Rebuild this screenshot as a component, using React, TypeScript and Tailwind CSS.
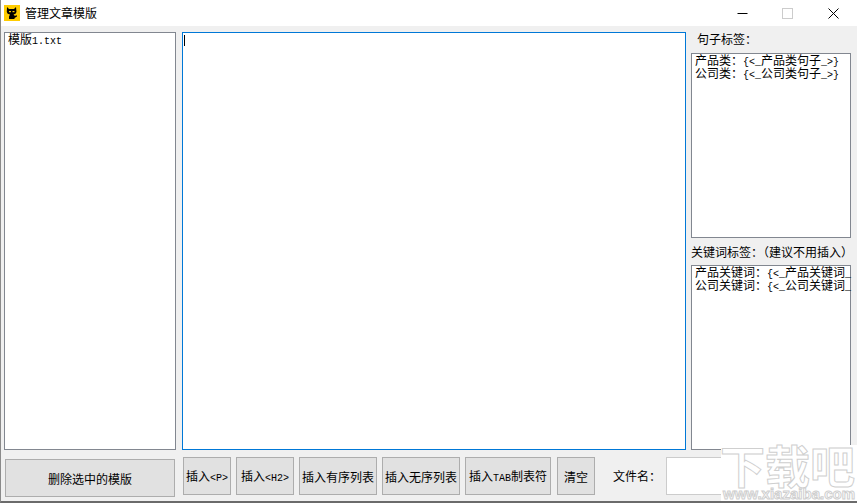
import React from "react";

const cjk = "font-['Noto_Sans_CJK_SC','Liberation_Sans',sans-serif]";
const C = "\uFF1A";
const L = "\uFF08";
const R = "\uFF09";

function M({ children }: { children: React.ReactNode }) {
  return <span className="font-['Liberation_Mono',monospace] text-[10px] leading-none">{children}</span>;
}

function Btn({ w, className, children }: { w: string; className?: string; children: React.ReactNode }) {
  return (
    <button className={`${w} ${className ?? ""} h-[38px] shrink-0 border border-[#adadad] bg-[#e1e1e1] text-center text-[12px] leading-[13px] whitespace-nowrap text-black`}>
      <span>{children}</span>
    </button>
  );
}

function TagBox({ h, rows }: { h: string; rows: React.ReactNode[] }) {
  return (
    <div className={`${h} w-[160px] border border-[#828790] bg-white pl-[3px] text-[12px] text-black`}>
      {rows.map((r, i) => (
        <div key={i} className="h-[13px] whitespace-nowrap leading-[11px]">{r}</div>
      ))}
    </div>
  );
}

export default function App() {
  return (
    <div className={`${cjk} relative flex h-[503px] w-[857px] flex-col overflow-hidden border-b-2 border-l border-b-[#6b6b6b] border-l-[#8a8a8a] bg-[#f0f0f0] text-black`}>
      <div className="flex h-[26px] shrink-0 items-center bg-white">
        <svg className="ml-[3px]" width="16" height="16" viewBox="0 0 16 16">
          <rect width="16" height="16" fill="#ffcc00" />
          <path d="M3 2 L5 4 H10 L12 2 L12.5 7 Q12 9 9.5 9.5 L11 11 L12.5 10 L13 11.5 L10.5 13 V14 H5 V11.5 L6 9.5 Q3 9 2.8 7 Z" fill="#000" />
          <rect x="5" y="6" width="2" height="1.2" fill="#ffcc00" />
          <rect x="8.5" y="6" width="2" height="1.2" fill="#ffcc00" />
        </svg>
        <span className="ml-[5px] text-[12px] leading-[16px]">管理文章模版</span>
        <div className="ml-auto flex h-full items-center">
          <svg className="mr-[34px]" width="11" height="11" viewBox="0 0 11 11"><path d="M0.5 5.5 H10.5" stroke="#000" strokeWidth="1" /></svg>
          <svg className="mr-[35px]" width="11" height="11" viewBox="0 0 11 11"><rect x="0.5" y="0.5" width="10" height="10" fill="none" stroke="#cccccc" /></svg>
          <svg className="mr-[18px]" width="11" height="11" viewBox="0 0 11 11"><path d="M0.5 0.5 L10.5 10.5 M10.5 0.5 L0.5 10.5" stroke="#000" strokeWidth="1" /></svg>
        </div>
      </div>

      <div className="box-content flex h-[418px] shrink-0 pl-[3px] pt-[6px]">
        <div className="h-[418px] w-[172px] border border-[#828790] bg-white pl-[3px] text-[12px]">
          <div className="h-[13px] leading-[11px]">模版<M>1.txt</M></div>
        </div>
        <div className="ml-[6px] h-[418px] w-[504px] border border-[#0078d7] bg-white pl-[1px] pt-[2px]">
          <div className="h-[11px] w-px bg-black" />
        </div>
        <div className="ml-[5px] flex h-[418px] flex-col">
          <div className="ml-[6px] h-[21px] text-[12px] leading-[14px]">句子标签{C}</div>
          <TagBox
            h="h-[185px]"
            rows={[
              <>产品类{C}<M>{"{<_"}</M>产品类句子<M>{"_>}"}</M></>,
              <>公司类{C}<M>{"{<_"}</M>公司类句子<M>{"_>}"}</M></>,
            ]}
          />
          <div className="mt-[7px] h-[20px] whitespace-nowrap text-[12px] leading-[14px]">关键词标签{C}{L}建议不用插入{R}</div>
          <TagBox
            h="h-[185px]"
            rows={[
              <>产品关键词{C}<M>{"{<_"}</M>产品关键词<M>_</M></>,
              <>公司关键词{C}<M>{"{<_"}</M>公司关键词<M>_</M></>,
            ]}
          />
        </div>
      </div>

      <div className="flex items-start pl-[4px] pt-[7px]">
        <button className="mt-[2px] h-[38px] w-[170px] shrink-0 border border-[#adadad] bg-[#e1e1e1] text-[12px] leading-[13px]">删除选中的模版</button>
        <div className="ml-[8px] flex gap-[5px]">
          <Btn w="w-[48px]">插入<M>{"<P>"}</M></Btn>
          <Btn w="w-[58px]">插入<M>{"<H2>"}</M></Btn>
          <Btn w="w-[78px]">插入有序列表</Btn>
          <Btn w="w-[78px]">插入无序列表</Btn>
          <Btn w="w-[86px]">插入<M>TAB</M>制表符</Btn>
          <Btn w="w-[38px]" className="ml-px">清空</Btn>
        </div>
        <div className="ml-[18px] flex h-[38px] items-center whitespace-nowrap text-[12px]">文件名{C}</div>
        <div className="ml-[5px] h-[38px] w-[120px] shrink-0 border border-[#cccccc] bg-white" />
      </div>

      <div className="absolute bottom-0 right-0 flex h-[56px] w-[136px] flex-col items-end bg-white pr-[2px]">
        <div className="h-[42px] whitespace-nowrap text-[45px] font-bold leading-[40px] text-white [-webkit-text-stroke:1px_#cfcfcf]">下载吧</div>
        <div className="h-[14px] whitespace-nowrap font-['Liberation_Sans',sans-serif] text-[15px] font-bold leading-[13px] text-white [-webkit-text-stroke:1px_#cfcfcf]">www.xiazaiba.com</div>
      </div>
    </div>
  );
}
